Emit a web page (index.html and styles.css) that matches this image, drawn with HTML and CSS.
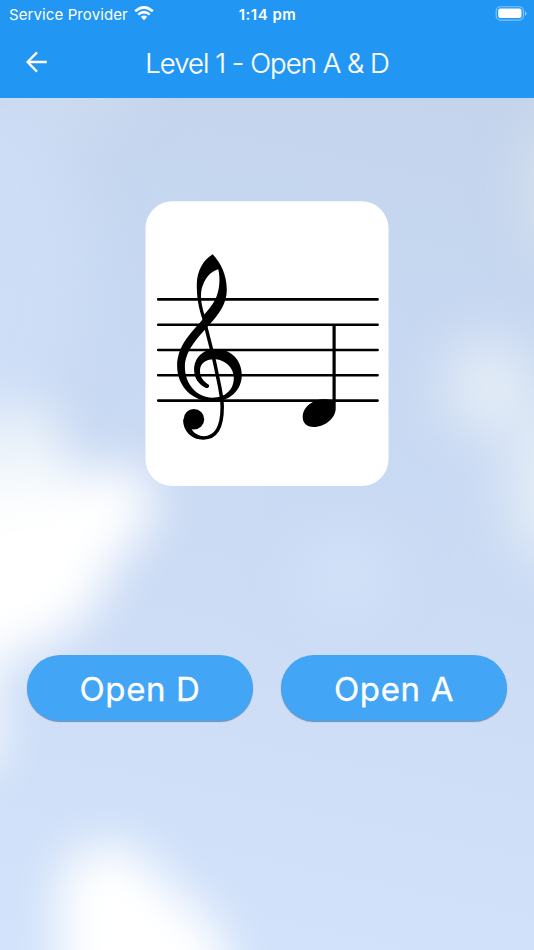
FILE: index.html
```html
<!DOCTYPE html>
<html lang="en">
<head>
<meta charset="utf-8">
<title>Level 1 - Open A &amp; D</title>
<link rel="stylesheet" href="styles.css">
</head>
<body>
<div class="app">
  <header class="header">
    <div class="status">
      <div class="carrier"><span class="carrier-name">Service Provider</span>
        <svg class="wifi" width="20" height="15" viewBox="0 0 20 15" fill="none" stroke="#fff" stroke-width="2.5"><path d="M1.2 5.3Q10-2.5 18.8 5.3M4.2 8.6Q10 3.6 15.8 8.6"/><path d="M6.8 10.8Q10 8.1 13.2 10.8L10 14.2Z" fill="#fff" stroke="none"/></svg>
      </div>
      <time class="time">1:14 pm</time>
      <svg class="battery" width="32" height="15" viewBox="0 0 32 15"><rect x="1.200" y=".7" width="27.2" height="13.4" rx="4" fill="none" stroke="#fff" stroke-opacity=".45" stroke-width="1.1"/><rect x="3.200" y="2.6" width="23.3" height="9.5" rx="2" fill="#fff"/><path d="M29.900 5.2q1.6.6 1.6 2.3t-1.6 2.3z" fill="#fff" fill-opacity=".5"/></svg>
    </div>
    <div class="toolbar">
      <svg class="back" width="22" height="22" viewBox="0 0 22 22" fill="none" stroke="#fff" stroke-width="2.3"><path d="M20.8 11H2M11 1.4L1.500 11l9.5 9.6"/></svg>
      <h1 class="title">Level 1 - Open A &amp; D</h1>
    </div>
  </header>
  <main class="stage">
    <svg class="sky" width="534" height="852" viewBox="0 98 534 852">
      <defs>
        <filter id="soft" x="-100%" y="-100%" width="300%" height="300%" color-interpolation-filters="sRGB"><feGaussianBlur stdDeviation="24"/></filter>
        <filter id="haze" x="-100%" y="-100%" width="300%" height="300%" color-interpolation-filters="sRGB"><feGaussianBlur stdDeviation="30"/></filter>
      </defs>
      <g filter="url(#soft)">
        <path d="M-80 478L20 468L75 474L138 466Q168 508 140 538L118 554Q98 618 55 640L5 660L-80 660Z" fill="#fff"/>
        <path d="M-80 394L15 388L56 414L76 490L-80 520Z" fill="#f4f9fc" fill-opacity=".85"/>
        <path d="M-80 600H-2V770H-80Z" fill="#fff" fill-opacity=".9"/>
        <path d="M62 870Q85 836 134 848Q158 878 185 898Q215 920 228 950L235 1050H72Q50 930 62 870Z" fill="#fff"/>
      </g>
      <g filter="url(#haze)">
        <ellipse cx="490" cy="387" rx="44" ry="46" fill="#e9f0f7"/>
        <ellipse cx="562" cy="490" rx="50" ry="75" fill="#e9f1f8"/>
        <ellipse cx="564" cy="190" rx="34" ry="72" fill="#dbe4ed"/>
        <ellipse cx="345" cy="575" rx="46" ry="38" fill="#d6e5fa" fill-opacity=".8"/>
        <ellipse cx="78" cy="95" rx="60" ry="26" fill="#d6e2f2" fill-opacity=".6"/>
        <ellipse cx="-20" cy="260" rx="110" ry="170" fill="#d0e0f8" fill-opacity=".7"/>
      </g>
    </svg>
    <div class="quiz">
      <svg class="staff" width="244" height="286" viewBox="145 201 244 286">
        <rect x="145.500" y="201.300" width="243" height="284.800" rx="27" fill="#fff"/>
        <path d="M158.2 299.4H377.6M158.2 324.7H377.6M158.2 350H377.6M158.2 375.3H377.6M158.2 400.6H377.6" stroke="#000" stroke-width="2.6" stroke-linecap="round"/>
        <path fill-rule="evenodd" d="M212.7 254.2C203 260 197 271 196.800 284C196.700 298 198.500 307 202.500 319.500C193 331 177 345 177.100 366C177.300 387 193 401.600 212.500 401.600C230 401.600 241.800 390 241.800 375C241.800 359 230 349 215.500 349C203 349 194 358 194.100 370C194.200 379 199 384.500 205.900 387.900C208.300 388.900 210.200 386 208.400 384.500C202.500 380.500 200 376.500 200 370.500C200 363.500 206 359.300 213.500 359.300C225 359.300 233.800 367.500 233.800 378C233.800 390 225 397.700 212.500 397.700C197 397.700 184.900 384 184.900 367C184.900 351 197 338.500 208.400 325.700C219 314 226.800 304 226.800 290C226.800 275 221 263 212.700 254.200ZM218.300 269.300C220.500 279 219.700 291 215 300C212 305.500 208 310.500 204.300 314.500C200 300 199.700 291 204.200 282C207.700 275 212.500 271 218.300 269.300Z"/>
        <path d="M204 319C207.500 335 213 353 216 369C218.500 382 222.200 395 222.200 407C222.200 427 216 437.800 203.500 437.900C192.500 438 184.900 430 184.900 420" fill="none" stroke="#000" stroke-width="3.500"/>
        <circle cx="193.900" cy="419.200" r="10.300"/>
        <path d="M183.600 419C183.600 430 190 437 198 439L203 436.500C197 435 193 432.500 191.500 428.500Z"/>
        <path d="M332.500 324.700H335.700V408.500C335.700 418 325 427 314 427C306 427 302.600 422.500 302.700 416.500C303 407 313 399.300 324 399.300C328 399.300 330.500 399.700 332.500 401.200Z"/>
      </svg>
      <div class="answers">
        <button class="answer">Open D</button>
        <button class="answer">Open A</button>
      </div>
    </div>
  </main>
</div>
</body>
</html>
```

FILE: styles.css
```css
* { box-sizing: border-box; }
body { margin: 0; font-family: Inter, "Liberation Sans", sans-serif; color: #fff; }
.app { width: 534px; height: 950px; display: flex; flex-direction: column; overflow: hidden; }
.header { height: 98px; background: #2196f3; }
.status { height: 28px; display: grid; grid-template-columns: 1fr auto 1fr; align-items: center; padding: 0 7px 0 9px; }
.carrier { display: flex; align-items: center; gap: 6px; font-size: 15px; letter-spacing: .1px; }
.carrier-name { white-space: nowrap; }
.wifi { margin: -2px 0 0; }
.time { font-size: 15px; font-weight: 600; letter-spacing: .5px; margin-left: -1px; }
.battery { justify-self: end; margin-top: -1px; }
.toolbar { height: 70px; display: grid; grid-template-columns: 22px 1fr 22px; align-items: center; padding: 0 26px; }
.back { margin-top: -2px; }
.title { margin: 0; text-align: center; font-size: 27.500px; line-height: 34px; font-weight: 300; letter-spacing: -.95px; white-space: nowrap; -webkit-text-stroke: .2px #fff; }
.stage { flex: 1; display: grid; overflow: hidden; background: linear-gradient(192deg, #c4d4ec 0%, #c7d8f2 28%, #ccdcf5 58%, #d2e3fb 100%); }
.sky, .quiz { grid-area: 1 / 1; }
.sky { display: block; }
.quiz { z-index: 1; display: flex; flex-direction: column; align-items: center; padding-top: 103px; }
.staff { display: block; flex: none; }
.answers { width: 480px; margin-top: 168px; display: grid; grid-template-columns: 1fr 1fr; gap: 28px; }
.answer { height: 66px; padding: 2px 0 0; border: 0; border-radius: 33px; background: #42a5f5; color: #fff; font: 400 33px/64px Inter, "Liberation Sans", sans-serif; letter-spacing: .65px; -webkit-text-stroke: .3px #fff; box-shadow: 0 1px 1px rgba(55,75,105,.55); }
```
